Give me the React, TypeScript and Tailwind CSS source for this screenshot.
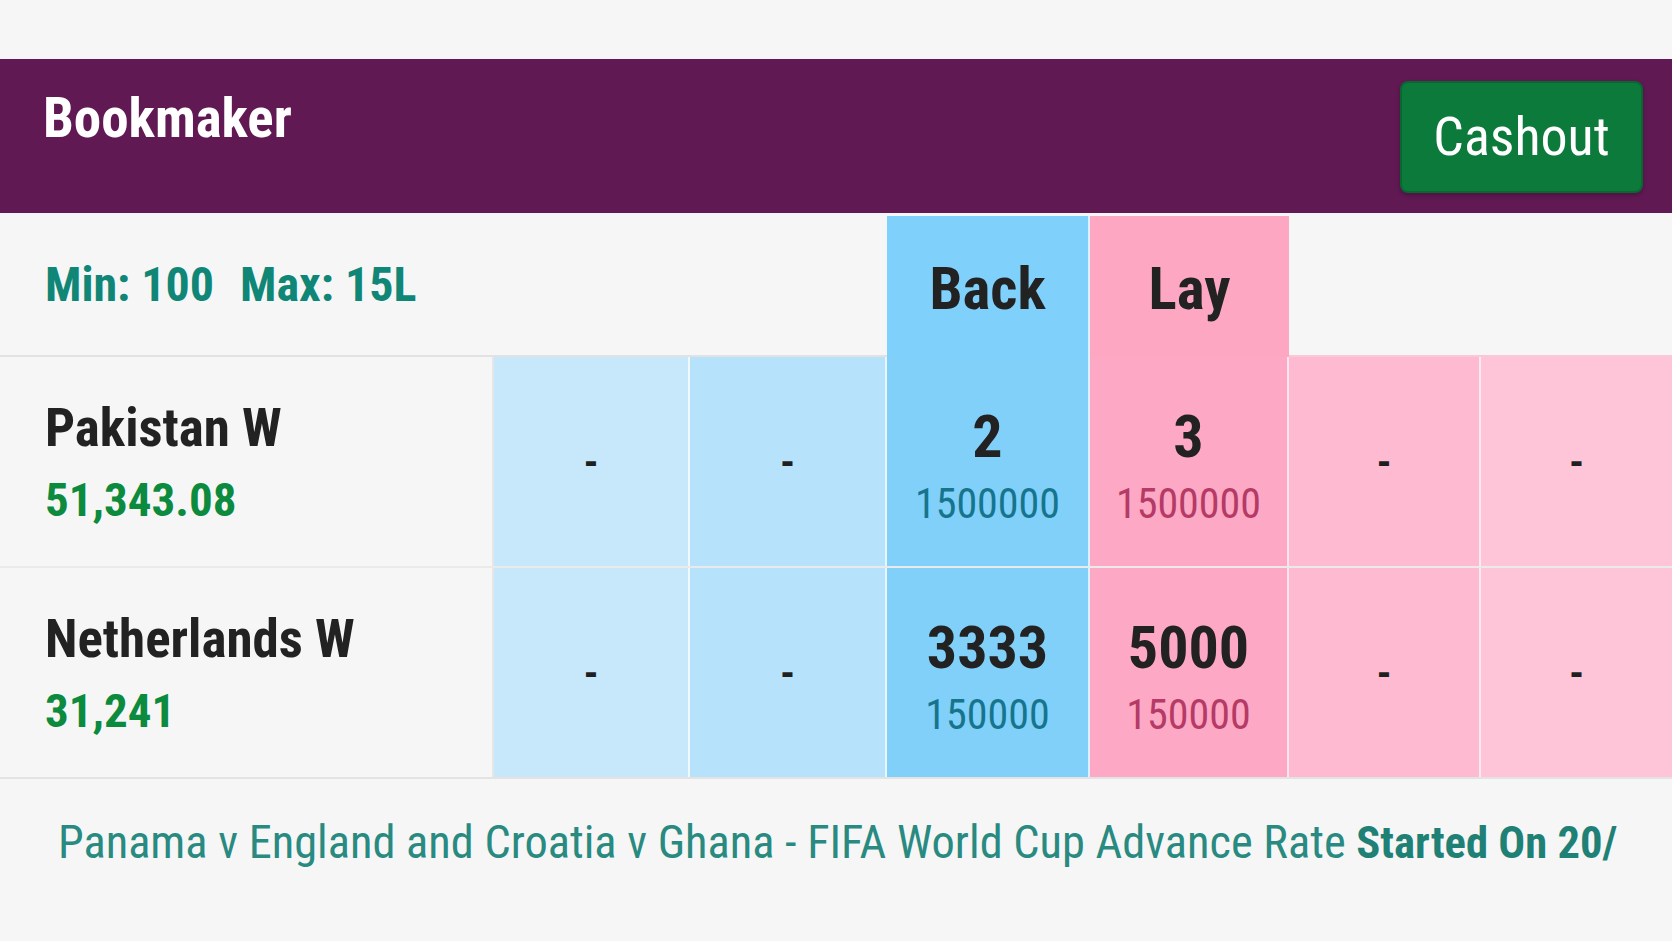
type Runner = {
  name: string;
  exposure: string;
  back: [string, string, { odds: string; size: string }];
  lay: [{ odds: string; size: string }, string, string];
};

const runners: Runner[] = [
  {
    name: "Pakistan W",
    exposure: "51,343.08",
    back: ["-", "-", { odds: "2", size: "1500000" }],
    lay: [{ odds: "3", size: "1500000" }, "-", "-"],
  },
  {
    name: "Netherlands W",
    exposure: "31,241",
    back: ["-", "-", { odds: "3333", size: "150000" }],
    lay: [{ odds: "5000", size: "150000" }, "-", "-"],
  },
];

const cols = "grid grid-cols-[494px_196px_197px_203px_199px_192px_1fr]";

function Dash() {
  return (
    <div className="flex h-full items-center justify-center pt-[2px] text-[42px] font-bold leading-none text-[#1f1f1f]">
      -
    </div>
  );
}

function Price({ odds, size, tone }: { odds: string; size: string; tone: "back" | "lay" }) {
  return (
    <div className="flex h-full flex-col items-center justify-center gap-[16px] pt-[8px] leading-none">
      <span className="text-[60px] font-bold text-[#222222]">{odds}</span>
      <span className={`text-[42px] ${tone === "back" ? "text-[#16758d]" : "text-[#b53a66]"}`}>{size}</span>
    </div>
  );
}

export default function App() {
  return (
    <div className="min-h-screen bg-[#f6f6f6] pt-[59px] font-['Roboto_Condensed',Roboto,sans-serif]">
      {/* market header */}
      <div className="flex h-[154px] items-start justify-between bg-[#601953] pl-[43px] pr-[29px]">
        <h2 className="mt-[32px] text-[55px] font-bold leading-none text-white">Bookmaker</h2>
        <button className="mt-[22px] flex h-[112px] w-[243px] items-center justify-center rounded-lg border-2 border-[#0a6731] bg-[#0b7a3b] text-[54px] leading-none text-white shadow-[0_2px_4px_rgba(0,0,0,0.25)]">
          Cashout
        </button>
      </div>

      {/* column titles */}
      <div className={`${cols} h-[144px]`}>
        <div className="col-span-3 flex items-center gap-[26px] border-b-2 border-[#e2e2e2] pl-[45px] pt-[2px] text-[48px] font-bold leading-none text-[#0f8676]">
          <span>Min: 100</span>
          <span>Max: 15L</span>
        </div>
        <div className="mt-[3px] flex items-center justify-center border-r-2 border-white/70 bg-[#7fd0fa] pt-[4px] text-[59px] font-bold leading-none text-[#222222]">
          Back
        </div>
        <div className="mt-[3px] flex items-center justify-center bg-[#fda7c3] pt-[4px] text-[59px] font-bold leading-none text-[#222222]">
          Lay
        </div>
        <div className="col-span-2 border-b-2 border-[#f9c9d7]" />
      </div>

      {runners.map((r, i) => (
        <div key={r.name} className={`${cols} ${i === 0 ? "h-[209px]" : "h-[211px] border-t-2 border-[#eaeaea]"}`}>
          <div className="flex flex-col justify-center gap-[21px] border-r-2 border-[#e6e6e6] pl-[45px] pt-[2px] leading-none">
            <span className="text-[53px] font-bold text-[#222222]">{r.name}</span>
            <span className="text-[47px] font-bold text-[#0c8a3e]">{r.exposure}</span>
          </div>
          <div className="border-r-2 border-white/70 bg-[#c6e8fa]">
            <Dash />
          </div>
          <div className="border-r-2 border-white/70 bg-[#b6e2fb]">
            <Dash />
          </div>
          <div className="border-r-2 border-white/70 bg-[#80d0fa]">
            <Price odds={r.back[2].odds} size={r.back[2].size} tone="back" />
          </div>
          <div className="border-r-2 border-white/70 bg-[#fda8c4]">
            <Price odds={r.lay[0].odds} size={r.lay[0].size} tone="lay" />
          </div>
          <div className="border-r-2 border-white/70 bg-[#fdbad1]">
            <Dash />
          </div>
          <div className="bg-[#fdc5d7]">
            <Dash />
          </div>
        </div>
      ))}

      {/* rate notice */}
      <div className="whitespace-nowrap border-t-2 border-[#e3e3e3] pl-[58px] pt-[40px] text-[46.4px] leading-none text-[#288a80]">
        Panama v England and Croatia v Ghana - FIFA World Cup Advance Rate{" "}
        <span className="text-[44.6px] font-bold text-[#1f8076]">Started On 20/</span>
      </div>
    </div>
  );
}
